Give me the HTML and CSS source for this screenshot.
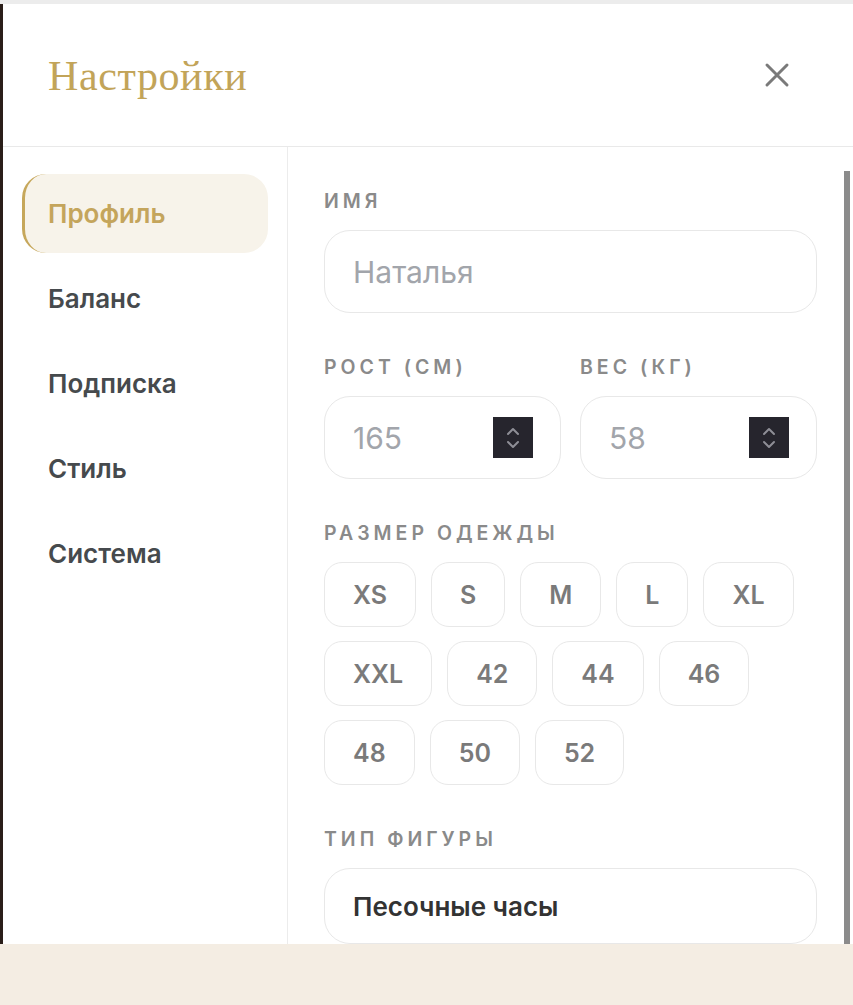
FILE: index.html
```html
<!DOCTYPE html>
<html lang="ru">
<head>
    <meta charset="UTF-8">
    <meta name="viewport" content="width=device-width, initial-scale=1.0">
    <title>Настройки</title>
    <link rel="stylesheet" href="styles.css">
</head>
<body>
    <div class="stage">
        <div class="modal">
            <header class="modal-header">
                <h1>Настройки</h1>
                <button class="close-btn" aria-label="Закрыть">
                    <svg width="26" height="26" viewBox="0 0 26 26">
                        <path d="M3 3 L23 23 M23 3 L3 23" stroke="#7a7a7a" stroke-width="3" stroke-linecap="round" fill="none"/>
                    </svg>
                </button>
            </header>

            <div class="modal-body">
                <nav class="sidebar">
                    <div class="nav-item active">Профиль</div>
                    <div class="nav-item">Баланс</div>
                    <div class="nav-item">Подписка</div>
                    <div class="nav-item">Стиль</div>
                    <div class="nav-item">Система</div>
                </nav>

                <main class="content">
                    <div class="field">
                        <label class="label">Имя</label>
                        <div class="input placeholder">Наталья</div>
                    </div>

                    <div class="field-row">
                        <div class="field">
                            <label class="label">Рост (см)</label>
                            <div class="input number">
                                <span class="placeholder">165</span>
                                <span class="spinner">
                                    <svg width="16" height="28" viewBox="0 0 16 28">
                                        <path d="M3 10 L8 5 L13 10 M3 18 L8 23 L13 18" stroke="#8e8e96" stroke-width="2" stroke-linecap="round" stroke-linejoin="round" fill="none"/>
                                    </svg>
                                </span>
                            </div>
                        </div>
                        <div class="field">
                            <label class="label">Вес (кг)</label>
                            <div class="input number">
                                <span class="placeholder">58</span>
                                <span class="spinner">
                                    <svg width="16" height="28" viewBox="0 0 16 28">
                                        <path d="M3 10 L8 5 L13 10 M3 18 L8 23 L13 18" stroke="#8e8e96" stroke-width="2" stroke-linecap="round" stroke-linejoin="round" fill="none"/>
                                    </svg>
                                </span>
                            </div>
                        </div>
                    </div>

                    <div class="field">
                        <label class="label">Размер одежды</label>
                        <div class="sizes">
                            <div class="size-row">
                                <div class="chip">XS</div>
                                <div class="chip">S</div>
                                <div class="chip">M</div>
                                <div class="chip">L</div>
                                <div class="chip">XL</div>
                            </div>
                            <div class="size-row">
                                <div class="chip">XXL</div>
                                <div class="chip">42</div>
                                <div class="chip">44</div>
                                <div class="chip">46</div>
                            </div>
                            <div class="size-row">
                                <div class="chip">48</div>
                                <div class="chip">50</div>
                                <div class="chip">52</div>
                            </div>
                        </div>
                    </div>

                    <div class="field">
                        <label class="label">Тип фигуры</label>
                        <div class="input select">Песочные часы</div>
                    </div>
                </main>

                <div class="scrollbar"></div>
            </div>
        </div>
    </div>
    <div class="footer-bg"></div>
</body>
</html>
```

FILE: styles.css
```css
/* Reset */
* {
    margin: 0;
    padding: 0;
    box-sizing: border-box;
    font-family: Inter, "Noto Sans", sans-serif;
}

body {
    background: #f4ede3;
    height: 1005px;
    overflow: hidden;
}

/* Dark backdrop peeking at the left edge */
.stage {
    height: 944px;
    border-top: 4px solid #ececec;
    padding-left: 3px;
    background: #2a1e19;
}

.modal {
    height: 100%;
    background: #ffffff;
    display: flex;
    flex-direction: column;
}

/* Header */
.modal-header {
    height: 143px;
    flex-shrink: 0;
    display: flex;
    align-items: center;
    justify-content: space-between;
    padding: 0 61px 0 45px;
    border-bottom: 1px solid #e9e9e9;
}

.modal-header h1 {
    font-family: "Liberation Serif", "DejaVu Serif", serif;
    font-weight: normal;
    font-size: 42px;
    color: #c2a459;
    letter-spacing: 0.6px;
    margin-top: 2px;
}

.close-btn {
    background: none;
    border: none;
    width: 30px;
    height: 30px;
    display: flex;
    align-items: center;
    justify-content: center;
    cursor: pointer;
}

/* Body */
.modal-body {
    flex: 1;
    display: flex;
    overflow: hidden;
}

.sidebar {
    width: 285px;
    flex-shrink: 0;
    border-right: 1px solid #ececec;
    padding: 27px 19px 0 19px;
    display: flex;
    flex-direction: column;
    gap: 6px;
}

.nav-item {
    height: 79px;
    display: flex;
    align-items: center;
    padding-left: 26px;
    font-size: 26px;
    font-weight: 600;
    color: #464a4d;
    border-radius: 24px;
}

.nav-item.active {
    background: #f7f3ea;
    color: #c4a55c;
    border-left: 3px solid #c6a75b;
    padding-left: 23px;
}

/* Content */
.content {
    flex: 1;
    padding: 44px 27px 0 36px;
    display: flex;
    flex-direction: column;
    gap: 44px;
}

.field {
    display: flex;
    flex-direction: column;
    gap: 19px;
}

.field-row {
    display: flex;
    gap: 19px;
}

.field-row .field {
    flex: 1;
}

.label {
    font-size: 19.5px;
    line-height: 20px;
    font-weight: 600;
    letter-spacing: 4px;
    text-transform: uppercase;
    color: #8a8a8a;
}

.input {
    height: 83px;
    border: 1.5px solid #e8e8e8;
    border-radius: 26px;
    display: flex;
    align-items: center;
    padding: 0 28px;
    font-size: 30px;
}

.placeholder {
    color: #a2a5ab;
}

.input.number {
    justify-content: space-between;
    padding-right: 27px;
}

.spinner {
    width: 40px;
    height: 41px;
    background: #26252d;
    display: flex;
    align-items: center;
    justify-content: center;
}

.select {
    height: 76px;
    font-size: 26px;
    font-weight: 600;
    color: #333333;
}

/* Clothing sizes */
.sizes {
    display: flex;
    flex-direction: column;
    gap: 14px;
}

.size-row {
    display: flex;
    gap: 15px;
}

.chip {
    height: 65px;
    padding: 0 28px;
    border: 1.5px solid #e8e8e8;
    border-radius: 18px;
    display: flex;
    align-items: center;
    justify-content: center;
    font-size: 25px;
    font-weight: 600;
    color: #7a7a7a;
}

.scrollbar {
    width: 6px;
    margin: 24px 3px 0 0;
    background: #8b8b8b;
}

.footer-bg {
    height: 61px;
}
```
